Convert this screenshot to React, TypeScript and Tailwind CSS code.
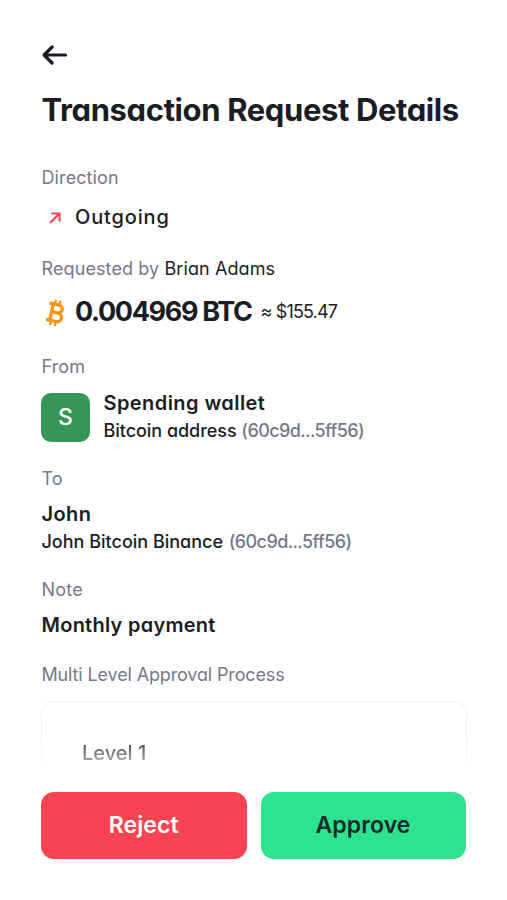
import React from "react";

interface DetailProps {
  label: string;
  className?: string;
  labelClassName?: string;
  children: React.ReactNode;
}

const labelStyle = "text-[18px] leading-6 text-[#74798a]";

const Detail: React.FC<DetailProps> = ({ label, className = "", labelClassName = "tracking-[0.1px]", children }) => (
  <section className={className}>
    <h2 className={`${labelStyle} ${labelClassName}`}>{label}</h2>
    {children}
  </section>
);

const Address = ({ className = "" }: { className?: string }) => (
  <span className={`tracking-[-0.6px] text-[#74798a] ${className}`}>(60c9d...5ff56)</span>
);

const BackIcon = () => (
  <svg width="26" height="20" viewBox="0 0 26 20" fill="none" stroke="#1b1d24" strokeWidth="3.2" strokeLinecap="round" strokeLinejoin="round">
    <path d="M23.5 10H2.5M10.1 2L2.1 10L10.1 18" />
  </svg>
);

const OutgoingIcon = () => (
  <svg width="12" height="12" viewBox="0 0 12 12" fill="none" stroke="#f84357" strokeWidth="2">
    <path d="M1 11L10.2 1.8M2.4 1.4H10.6V9.6" />
  </svg>
);

const BitcoinIcon = () => (
  <svg width="20" height="28" viewBox="0 0 20 28" fill="none" stroke="#f7931a" strokeWidth="3.3" strokeLinejoin="round">
    <g transform="rotate(13 10 14)">
      <path d="M1.4 5.6H11.3A4 4 0 0 1 11.3 13.6H5.4M11.3 13.6H12A4.4 4.4 0 0 1 12 22.4H1.4M5.4 5.6V22.4" />
      <path d="M7 1V5.5M11.6 1V5.5M7 22.5V27M11.6 22.5V27" strokeWidth="2.4" />
    </g>
  </svg>
);

export default function App() {
  return (
    <main className="flex h-[900px] w-[507px] flex-col overflow-hidden bg-white px-[41.5px] font-['Inter',sans-serif] text-[#1b1d24] [font-feature-settings:'cv11']">
      <button className="mt-[44.5px] h-5 w-[26px]" aria-label="Back">
        <BackIcon />
      </button>
      <h1 className="mt-[25.5px] text-[31px] leading-10 font-bold tracking-[-0.38px] whitespace-nowrap">
        Transaction Request Details
      </h1>

      <Detail label="Direction" className="mt-9">
        <div className="mt-[13px] flex h-7 items-center">
          <span className="flex w-[33.5px] pt-px pl-[7.5px]"><OutgoingIcon /></span>
          <span className="text-[20px] leading-7 font-medium tracking-[0.85px]">Outgoing</span>
        </div>
      </Detail>

      <section className="mt-[26px]">
        <p className={`${labelStyle} tracking-[0.1px]`}>
          Requested by <span className="text-[#1b1d24]">Brian Adams</span>
        </p>
        <div className="mt-[15px] flex h-8 items-center whitespace-nowrap">
          <span className="flex w-[33.5px] pt-0.5 pl-1"><BitcoinIcon /></span>
          <span className="text-[27px] leading-8 font-bold tracking-[-1.35px]">0.004969 BTC</span>
          <span className="ml-[9px] text-[18px] leading-8 tracking-[-0.87px]">≈ $155.47</span>
        </div>
      </section>

      <Detail label="From" className="mt-[27px]">
        <div className="mt-[10px] flex items-center gap-[13.5px]">
          <div className="-ml-[0.5px] flex h-[49px] w-[49px] items-center justify-center rounded-[10px] bg-[#369657] text-[23px] font-medium text-white">
            S
          </div>
          <div>
            <p className="text-[20px] leading-7 font-semibold tracking-[0.43px]">Spending wallet</p>
            <p className="text-[18px] leading-7 font-medium tracking-[-0.04px]">
              Bitcoin address <Address />
            </p>
          </div>
        </div>
      </Detail>

      <Detail label="To" className="mt-[22px]">
        <p className="mt-[9px] text-[20px] leading-7 font-semibold tracking-[0.4px]">John</p>
        <p className="text-[18px] leading-7 font-medium">
          John Bitcoin Binance <Address className="ml-px" />
        </p>
      </Detail>

      <Detail label="Note" className="mt-[22px]" labelClassName="tracking-[0.2px]">
        <p className="mt-[9px] text-[20px] leading-7 font-semibold tracking-[0.25px]">Monthly payment</p>
      </Detail>

      {/* The list fades out above the action bar */}
      <Detail label="Multi Level Approval Process" className="mt-6" labelClassName="tracking-[-0.14px]">
        <div className="mt-[14px] -ml-[0.5px] h-[67px] w-[425.5px] rounded-t-[13px] border border-b-0 border-[#f0f0f2] mask-b-from-50% mask-b-to-115% pt-[37px] pl-10">
          <p className="text-[20px] leading-7 font-medium">Level 1</p>
        </div>
      </Detail>

      <footer className="mt-[24px] -ml-[0.5px] flex gap-[14px]">
        <button className="h-[67px] w-[206px] rounded-[13px] bg-[#f84352] text-[23px] font-semibold tracking-[0.1px] text-white">
          Reject
        </button>
        <button className="h-[67px] w-[205.5px] rounded-[13px] bg-[#2de38f] text-[23px] font-semibold tracking-[0.1px] text-[#1b2b2b]">
          Approve
        </button>
      </footer>
    </main>
  );
}
